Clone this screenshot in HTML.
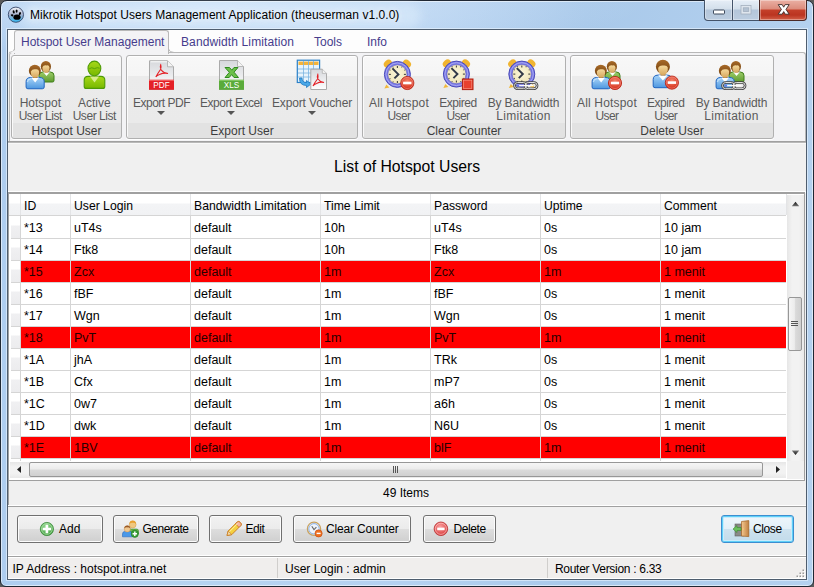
<!DOCTYPE html>
<html><head><meta charset="utf-8">
<style>
*{margin:0;padding:0;box-sizing:border-box}
html,body{width:814px;height:587px;overflow:hidden;background:#5a5a5a;font-family:"Liberation Sans",sans-serif;font-size:12px;color:#000}
body{position:relative}
.a{position:absolute}
.t{position:absolute;white-space:nowrap;line-height:14px}
#win{position:absolute;left:0;top:0;width:814px;height:587px;border:1px solid #1f2733;border-radius:7px 7px 6px 6px;background:radial-gradient(ellipse 430px 50px at 210px 6px,rgba(222,236,252,0.7),rgba(222,236,252,0) 100%),linear-gradient(90deg,#aecdef 0%,#b6d3f1 25%,#b4d1f0 50%,#a9c9ea 72%,#b4d1ef 100%);box-shadow:inset 0 0 0 1px rgba(255,255,255,0.55)}
#client{position:absolute;left:7px;top:29px;width:800px;height:551px;border:1px solid #4e5d6e;background:#f0f0f0;box-shadow:0 0 0 1px rgba(235,245,255,0.6)}
/* caption buttons */
.cap{position:absolute;top:0;height:21px;box-shadow:inset 0 0 0 1px rgba(255,255,255,0.35);border:1px solid #44546a;border-top:none}
/* ribbon */
#tabs{position:absolute;left:8px;top:30px;width:798px;height:112px;background:#f4f5f7}
.grp{position:absolute;top:55px;height:84px;border:1px solid #b0b0b0;border-radius:3px;background:linear-gradient(180deg,#f8f8f8 0,#f5f5f5 20px,#ebebeb 20px,#eaeaea 67px,#e2e2e2 67px);box-shadow:inset 1px 1px 0 rgba(255,255,255,0.8),0 1px 0 #fff}
.bl{position:absolute;color:#5a5a5a;text-align:center;line-height:13px;white-space:nowrap}
.gl{position:absolute;color:#3c3c3c;text-align:center;white-space:nowrap;line-height:14px}
/* grid */
.row{position:absolute;left:20px;width:767px;height:22px;border-bottom:1px solid #d8d8d8}
.row.red{background:#ff0000}
.row span{position:absolute;top:4px;white-space:nowrap;line-height:14px;font-size:12.5px}
.row.red span{color:#800000}
.vl{position:absolute;width:1px;background:#d8d8d8}
.btn{position:absolute;top:515px;height:28px;border:1px solid #707070;border-radius:3px;background:linear-gradient(180deg,#f2f2f2 0,#ebebeb 50%,#dddddd 51%,#cfcfcf 100%);box-shadow:inset 0 0 0 1px #fcfcfc}
.btn span{position:absolute;top:6px;white-space:nowrap;line-height:14px;color:#000}

#grid{position:absolute;left:9px;top:194px;width:778px;height:267px;overflow:hidden;background:#fff}
.hdr{position:absolute;left:0;top:0;width:777px;height:22px;border-bottom:1px solid #d5d5d5;background:linear-gradient(180deg,#ffffff 0,#ffffff 9px,#f3f4f6 10px,#f1f2f4 100%)}
.ht{position:absolute;top:5px;white-space:nowrap;line-height:14px;font-size:12.2px}
.hs{position:absolute;top:0;width:1px;height:21px;background:#e3e4e6}
.rh{position:absolute;left:2px;width:9px;height:22px;border-bottom:1px solid #d5d5d5;background:linear-gradient(180deg,#fff 0,#fff 8px,#f0f0f2 9px,#ececee 100%)}
.row{position:absolute;left:12px;width:765px;height:22px;border-bottom:1px solid #d5d5d5}
.row.red{background:#ff0000}
.row span{position:absolute;top:4px;white-space:nowrap;line-height:14px;font-size:12.5px}
.row.red span{color:#260000}
.vl{position:absolute;top:22px;width:1px;height:260px;background:#d5d5d5}
.tab{color:#463c8c}
.dd{position:absolute;top:111px;width:0;height:0;border-left:4px solid transparent;border-right:4px solid transparent;border-top:4px solid #555}
</style></head><body>
<div id="win">
  <div class="a" style="left:20px;top:3px;width:400px;height:24px;border-radius:12px;background:rgba(220,236,252,0.55);filter:blur(5px)"></div>
  <div class="t" style="left:29px;top:7px;font-size:12px;color:#000;letter-spacing:0.05px;text-shadow:0 0 6px rgba(255,255,255,0.9),0 0 10px rgba(235,245,255,0.8)">Mikrotik Hotspot Users Management Application (theuserman v1.0.0)</div>
</div>
<!-- caption buttons -->
<div class="cap" style="left:704px;width:29px;border-radius:0 0 0 4px;background:linear-gradient(180deg,#e6eef7 0,#d3dfeb 45%,#b4c6da 50%,#bccde0 100%)"></div>
<div class="cap" style="left:732px;width:28px;border-left:1px solid #44546a;background:linear-gradient(180deg,#e6eef7 0,#d3dfeb 45%,#b4c6da 50%,#bccde0 100%)"></div>
<div class="cap" style="left:759px;width:48px;border-radius:0 0 4px 0;background:linear-gradient(180deg,#eab0a4 0,#dc8c7c 45%,#c4402a 50%,#bb3420 75%,#d26048 100%);border-color:#4a2a28"></div>
<svg class="a" style="left:704px;top:0" width="104" height="22" viewBox="0 0 104 22">
  <rect x="9.5" y="10" width="11" height="4" rx="0.8" fill="#fff" stroke="#3e4a5c" stroke-width="1"/>
  <rect x="37" y="5.5" width="10" height="8.5" fill="#dfe6ee" stroke="#a4b0be" stroke-width="0.8"/>
  <rect x="39.2" y="7.8" width="5.6" height="3.8" fill="#b4c2d2" stroke="#98a6b6" stroke-width="0.6"/>
  <path d="M74.2 4.6 L78.2 4.6 L79.7 7.2 L81.2 4.6 L85.2 4.6 L82 9.4 L85.2 14.2 L81.2 14.2 L79.7 11.6 L78.2 14.2 L74.2 14.2 L77.4 9.4 Z" fill="#fff" stroke="#3a2a28" stroke-width="0.9" stroke-linejoin="round"/>
</svg>
<svg class="a" style="left:4px;top:3px" width="24" height="24" viewBox="0 0 24 24">
  <defs><linearGradient id="gIco" x1="0" y1="0" x2="0" y2="1"><stop offset="0" stop-color="#f4f4f8"/><stop offset="0.5" stop-color="#a8b4d0"/><stop offset="1" stop-color="#30b8f4"/></linearGradient></defs>
  <circle cx="11.9" cy="11.7" r="7.6" fill="url(#gIco)" stroke="#34466a" stroke-width="0.9"/>
  <ellipse cx="13" cy="14.2" rx="3.6" ry="2.6" fill="#000"/>
  <ellipse cx="9.7" cy="8.9" rx="1" ry="1.6" fill="#000" transform="rotate(-15 9.7 8.9)"/>
  <ellipse cx="12.6" cy="8.1" rx="1" ry="1.6" fill="#000"/>
  <ellipse cx="15.9" cy="10.6" rx="1" ry="1.6" fill="#000" transform="rotate(25 15.9 10.6)"/>
  <ellipse cx="8.1" cy="12.3" rx="1.3" ry="1" fill="#000" transform="rotate(20 8.1 12.3)"/>
</svg>
<div id="client"></div>
<div class="a" style="left:8px;top:30px;width:798px;height:23px;background:#fdfdfd"></div>
<div class="a" style="left:9px;top:52px;width:797px;height:90px;border:1px solid #b8b8b8;border-bottom:none;border-radius:3px 3px 0 0;background:#f3f3f5"></div>
<div class="a" style="left:14px;top:30px;width:155px;height:24px;border:1px solid #b8b8b8;border-bottom:none;border-radius:3px 3px 0 0;background:#f3f3f5"></div>
<svg class="a" style="left:8px;top:46px" width="170" height="10" viewBox="0 0 170 10"><path d="M1 6.5 Q5.5 6.5 6.5 3" fill="none" stroke="#b8b8b8" stroke-width="1"/><path d="M2 7 L7 7 L7 4 Z" fill="#f3f3f5"/><path d="M160.5 3 Q161.5 6.5 166 6.5" fill="none" stroke="#b8b8b8" stroke-width="1"/></svg>
<div class="t tab" style="left:21px;top:35px">Hotspot User Management</div>
<div class="t tab" style="left:181px;top:35px;letter-spacing:0.12px">Bandwidth Limitation</div>
<div class="t tab" style="left:314px;top:35px">Tools</div>
<div class="t tab" style="left:367px;top:35px">Info</div>

<!-- ribbon groups -->
<div class="grp" style="left:11px;width:111px"></div>
<div class="grp" style="left:126px;width:232px"></div>
<div class="grp" style="left:362px;width:204px"></div>
<div class="grp" style="left:570px;width:204px"></div>

<svg width="0" height="0" style="position:absolute">
<defs>
  <linearGradient id="gBlue" x1="0" y1="0" x2="0" y2="1"><stop offset="0" stop-color="#a8d4f8"/><stop offset="1" stop-color="#4d97e0"/></linearGradient>
  <linearGradient id="gGreenShirt" x1="0" y1="0" x2="0" y2="1"><stop offset="0" stop-color="#9ccc6a"/><stop offset="1" stop-color="#5f9c2e"/></linearGradient>
  <linearGradient id="gHair" x1="0" y1="0" x2="0" y2="1"><stop offset="0" stop-color="#a86a28"/><stop offset="1" stop-color="#6e3e0c"/></linearGradient>
  <linearGradient id="gSkin" x1="0" y1="0" x2="0" y2="1"><stop offset="0" stop-color="#f4d89a"/><stop offset="1" stop-color="#d8a860"/></linearGradient>
  <linearGradient id="gLime" x1="0" y1="0" x2="0" y2="1"><stop offset="0" stop-color="#a6d818"/><stop offset="1" stop-color="#78b800"/></linearGradient>
  <linearGradient id="gPage" x1="0" y1="0" x2="0" y2="1"><stop offset="0" stop-color="#d6d8dc"/><stop offset="1" stop-color="#ffffff"/></linearGradient>
  <radialGradient id="gRed" cx="0.5" cy="0.35" r="0.6"><stop offset="0" stop-color="#f4846c"/><stop offset="1" stop-color="#d6301a"/></radialGradient>
  <radialGradient id="gFace" cx="0.5" cy="0.45" r="0.6"><stop offset="0" stop-color="#fbf6dc"/><stop offset="1" stop-color="#efe4b4"/></radialGradient>
  <linearGradient id="gChain" x1="0" y1="0" x2="0" y2="1"><stop offset="0" stop-color="#f0f0f0"/><stop offset="1" stop-color="#8a8a8a"/></linearGradient>

  <symbol id="pBlue" viewBox="0 0 40 40" overflow="visible">
    <path d="M6.1 27.5 Q6.1 23.7 10.5 23.5 L19.8 23.5 Q24.2 23.7 24.2 27.5 L24.2 33 Q24.2 34.75 22.4 34.75 L7.9 34.75 Q6.1 34.75 6.1 33 Z" fill="url(#gBlue)" stroke="#1f64c0" stroke-width="1"/>
    <path d="M7.5 28 Q7.5 25 10.8 24.8" fill="none" stroke="#d8ecfc" stroke-width="0.8"/>
    <path d="M11.2 23.6 L15.15 28.5 L19.1 23.6 Z" fill="#fff"/>
    <rect x="12.9" y="20.5" width="4.5" height="3.5" fill="#b88442"/>
    <ellipse cx="14.85" cy="16.8" rx="6" ry="6.1" fill="url(#gHair)"/>
    <path d="M10.8 17.4 Q12.3 14.6 15.8 15.3 Q18.5 14.9 19.1 17.2 L19 20 Q18.2 23.4 15 23.4 Q11.8 23.4 11 20 Z" fill="url(#gSkin)"/>
  </symbol>
  <symbol id="pGreen" viewBox="0 0 40 40" overflow="visible">
    <path d="M19 21.5 Q19 18.2 22.5 18 L30.5 18 Q34 18.2 34 21.5 L34 26.5 Q34 28 32.5 28 L20.5 28 Q19 28 19 26.5 Z" fill="url(#gGreenShirt)" stroke="#3f7e1a" stroke-width="1"/>
    <path d="M23.2 18.1 L26.5 22 L29.8 18.1 Z" fill="#fff"/>
    <rect x="24.4" y="15.6" width="4.2" height="3" fill="#b88442"/>
    <ellipse cx="25.9" cy="12.5" rx="5.1" ry="5.6" fill="url(#gHair)"/>
    <path d="M22.4 13.2 Q23.5 10.8 26.6 11.4 Q29 11 29.5 13.2 L29.4 15.5 Q28.7 18.6 26 18.6 Q23.3 18.6 22.6 15.5 Z" fill="url(#gSkin)"/>
  </symbol>
  <symbol id="pSingle" viewBox="0 0 40 40" overflow="visible">
    <path d="M7.2 25.5 Q7.2 21.3 12 21.1 L21 21.1 Q25.8 21.3 25.8 25.5 L25.8 32 Q25.8 33.7 24 33.7 L9 33.7 Q7.2 33.7 7.2 32 Z" fill="url(#gBlue)" stroke="#1f64c0" stroke-width="1"/>
    <path d="M12.2 21.2 L16.9 26.6 L21.6 21.2 Z" fill="#fff"/>
    <rect x="14.6" y="18" width="4.8" height="3.6" fill="#b88442"/>
    <ellipse cx="16.9" cy="12.8" rx="7" ry="7" fill="url(#gHair)"/>
    <path d="M12.2 13.8 Q14 10.8 17.6 11.6 Q21 11.2 21.8 13.6 L21.7 16.5 Q20.8 21 16.9 21 Q13 21 12.3 16.5 Z" fill="url(#gSkin)"/>
  </symbol>
  <symbol id="minus" viewBox="0 0 40 40" overflow="visible">
    <circle cx="0" cy="0" r="6.6" fill="url(#gRed)" stroke="#b8200e" stroke-width="0.8"/>
    <circle cx="0" cy="0" r="5.6" fill="none" stroke="#fbb" stroke-opacity="0.6" stroke-width="0.6"/>
    <rect x="-4.2" y="-1.3" width="8.4" height="2.6" fill="#fff"/>
  </symbol>
  <symbol id="chain" viewBox="0 0 40 40" overflow="visible">
    <rect x="1" y="1" width="12" height="6.2" rx="3.1" fill="none" stroke="#404040" stroke-width="2.6"/>
    <rect x="11.6" y="1" width="12" height="6.2" rx="3.1" fill="none" stroke="#404040" stroke-width="2.6"/>
    <rect x="1" y="1" width="12" height="6.2" rx="3.1" fill="none" stroke="#e0e0e0" stroke-width="1"/>
    <rect x="11.6" y="1" width="12" height="6.2" rx="3.1" fill="none" stroke="#e0e0e0" stroke-width="1"/>
    <rect x="5" y="3.4" width="15" height="1.4" fill="#fafafa"/>
    <circle cx="4.4" cy="4.1" r="1.2" fill="#6a7ae0"/>
  </symbol>
  <symbol id="clock" viewBox="0 0 40 40" overflow="visible">
    <ellipse cx="-9.6" cy="-10.8" rx="4.4" ry="3.4" fill="#f0b430" transform="rotate(-40 -9.6 -10.8)"/>
    <ellipse cx="9.6" cy="-10.8" rx="4.4" ry="3.4" fill="#f0b430" transform="rotate(40 9.6 -10.8)"/>
    <path d="M-11 10 L-13 14 L-8 13 Z" fill="#f2b838"/>
    <path d="M11 10 L13 14 L8 13 Z" fill="#f2b838"/>
    <circle cx="0" cy="0" r="13" fill="#7878e4" stroke="#4a4ab8" stroke-width="1"/>
    <circle cx="0" cy="0" r="11.5" fill="none" stroke="#a8a8f4" stroke-width="1"/>
    <circle cx="0" cy="0" r="9.6" fill="url(#gFace)" stroke="#5c5cc8" stroke-width="0.6"/>
    <g stroke="#444" stroke-width="1.1">
      <line x1="0" y1="-8.5" x2="0" y2="-6.5"/><line x1="0" y1="8.5" x2="0" y2="6.5"/>
      <line x1="-8.5" y1="0" x2="-6.5" y2="0"/><line x1="8.5" y1="0" x2="6.5" y2="0"/>
    </g>
    <g fill="#555"><circle cx="4.3" cy="-7.4" r="0.6"/><circle cx="7.4" cy="-4.3" r="0.6"/><circle cx="7.4" cy="4.3" r="0.6"/><circle cx="4.3" cy="7.4" r="0.6"/><circle cx="-4.3" cy="7.4" r="0.6"/><circle cx="-7.4" cy="4.3" r="0.6"/><circle cx="-7.4" cy="-4.3" r="0.6"/><circle cx="-4.3" cy="-7.4" r="0.6"/></g>
    <path d="M-5 -6 L1 0 L-3 4" fill="none" stroke="#333a48" stroke-width="2" stroke-linejoin="miter"/>
  </symbol>
</defs>
</svg>

<!-- Hotspot user list -->
<svg class="a" style="left:20px;top:54px" width="40" height="40" viewBox="0 0 40 40">
  <use href="#pGreen" x="0" y="0" width="40" height="40"/>
  <use href="#pBlue" x="0" y="0" width="40" height="40"/>
</svg>
<!-- Active user list -->
<svg class="a" style="left:74px;top:56px" width="40" height="40" viewBox="0 0 40 40">
  <path d="M10.2 24 Q10.2 20.6 14 20.4 L27 20.4 Q30.8 20.6 30.8 24 L30.8 30.4 Q30.8 32.4 28.8 32.4 L12.2 32.4 Q10.2 32.4 10.2 30.4 Z" fill="url(#gLime)" stroke="#4e9a06" stroke-width="1.1"/>
  <path d="M16 20.6 L20.5 26.5 L25 20.6 Z" fill="#d8ec8c"/>
  <ellipse cx="20.4" cy="12.4" rx="6.4" ry="7.3" fill="url(#gLime)" stroke="#4e9a06" stroke-width="1.1"/>
  <path d="M15.2 12.8 Q17.5 10.8 20.5 12.6 Q23.5 11 25.6 12.2" fill="none" stroke="#4e9a06" stroke-width="0.8"/>
</svg>
<!-- PDF -->
<svg class="a" style="left:143px;top:56px" width="40" height="40" viewBox="0 0 40 40">
  <path d="M6.5 4.8 L24.5 4.8 L30.5 10.8 L30.5 33.5 L6.5 33.5 Z" fill="url(#gPage)" stroke="#aaa" stroke-width="1"/>
  <path d="M7.5 5.8 L24 5.8" stroke="#fff" stroke-width="1"/>
  <path d="M24.5 4.8 L24.5 10.8 L30.5 10.8" fill="#f4f4f4" stroke="#aaa" stroke-width="0.8"/>
  <rect x="6" y="23.8" width="25" height="10" fill="#e42026"/>
  <rect x="6" y="23.8" width="25" height="1" fill="#f46a6a"/>
  <text x="18.5" y="32" font-family="Liberation Sans" font-size="8.2" fill="#fff" text-anchor="middle">PDF</text>
  <path d="M12.8 21 Q15 17 17.5 13.5 Q18.5 11 17.7 8.8 Q16.6 11 18.2 14 Q20.5 17 25 17.5 Q21 16.5 16.5 18.5 Q14 19.5 12.8 21 Z" fill="none" stroke="#e42026" stroke-width="1.1"/>
</svg>
<!-- XLS -->
<svg class="a" style="left:210px;top:56px" width="40" height="40" viewBox="0 0 40 40">
  <path d="M9.5 4.5 L27.5 4.5 L33.5 10.5 L33.5 33.5 L9.5 33.5 Z" fill="url(#gPage)" stroke="#aaa" stroke-width="1"/>
  <path d="M27.5 4.5 L27.5 10.5 L33.5 10.5" fill="#f4f4f4" stroke="#aaa" stroke-width="0.8"/>
  <rect x="9" y="23.8" width="25" height="10" fill="#5aab3a"/>
  <rect x="9" y="23.8" width="25" height="1" fill="#8ccc6a"/>
  <text x="21.5" y="32" font-family="Liberation Sans" font-size="8.2" fill="#fff" text-anchor="middle">XLS</text>
  <path d="M15 11.5 L19.5 11.5 L21.8 14.2 L24 11.5 L28 11.5 L24 16.2 L28.5 21.5 L24 21.5 L21.6 18.6 L19.2 21.5 L15 21.5 L19.4 16.3 Z" fill="#6cc04a" stroke="#2e8a1e" stroke-width="1"/>
</svg>
<!-- Voucher -->
<svg class="a" style="left:290px;top:54px" width="45" height="45" viewBox="0 0 45 45">
  <rect x="7.3" y="6.2" width="22.3" height="22.3" fill="#e8f4fc" stroke="#2a80c8" stroke-width="1.2"/>
  <rect x="8.5" y="7.6" width="20" height="3.4" fill="#f4b43a"/>
  <g stroke="#7ab4e0" stroke-width="0.8"><line x1="13.5" y1="7" x2="13.5" y2="28"/><line x1="18.5" y1="7" x2="18.5" y2="28"/><line x1="23.5" y1="7" x2="23.5" y2="28"/><line x1="8" y1="15" x2="29" y2="15"/><line x1="8" y1="19" x2="29" y2="19"/><line x1="8" y1="23" x2="29" y2="23"/></g>
  <path d="M9.5 24 L12 24 Q12 28.5 16.5 28.5 L16.5 26.5 L21 30 L16.5 33.5 L16.5 31.5 Q9.5 31.5 9.5 24 Z" fill="#4aa8e8" stroke="#1e78c0" stroke-width="0.8"/>
  <path d="M20.8 15.2 L32.3 15.2 L36.5 19.4 L36.5 35.5 L20.8 35.5 Z" fill="url(#gPage)" stroke="#aaa" stroke-width="1"/>
  <path d="M32.3 15.2 L32.3 19.4 L36.5 19.4" fill="#f4f4f4" stroke="#aaa" stroke-width="0.7"/>
  <path d="M23 32 Q25 28 27.5 25 Q28.3 22.5 27.8 20.5 Q26.8 22.5 28 25 Q30 28 34 28.5 Q30.5 27.5 26.5 29.5 Q24 30.6 23 32 Z" fill="none" stroke="#e42026" stroke-width="1.1"/>
</svg>
<!-- clocks -->
<svg class="a" style="left:380px;top:54px" width="40" height="40" viewBox="0 0 40 40">
  <use href="#clock" x="17.4" y="20.4" width="40" height="40"/>
  <use href="#minus" x="27.3" y="29" width="40" height="40"/>
</svg>
<svg class="a" style="left:438px;top:54px" width="40" height="40" viewBox="0 0 40 40">
  <use href="#clock" x="18.4" y="20.1" width="40" height="40"/>
  <rect x="24.4" y="25" width="10.6" height="10.6" fill="#e8402e" stroke="#b01e10" stroke-width="1"/>
  <rect x="25.6" y="26.2" width="8.2" height="8.2" fill="none" stroke="#f89a88" stroke-width="0.6"/>
</svg>
<svg class="a" style="left:502px;top:54px" width="40" height="40" viewBox="0 0 40 40">
  <use href="#clock" x="19.8" y="20.1" width="40" height="40"/>
  <use href="#chain" x="11.5" y="27.5" width="40" height="40"/>
</svg>
<!-- delete users -->
<svg class="a" style="left:586px;top:54px" width="40" height="40" viewBox="0 0 40 40">
  <use href="#pGreen" x="0" y="0" width="40" height="40"/>
  <use href="#pBlue" x="0" y="0" width="40" height="40"/>
  <use href="#minus" x="29" y="29" width="40" height="40"/>
</svg>
<svg class="a" style="left:646px;top:54px" width="40" height="40" viewBox="0 0 40 40">
  <use href="#pSingle" x="0" y="0" width="40" height="40"/>
  <use href="#minus" x="25.9" y="28.6" width="40" height="40"/>
</svg>
<svg class="a" style="left:710px;top:54px" width="40" height="40" viewBox="0 0 40 40">
  <use href="#pGreen" x="0" y="0" width="40" height="40"/>
  <use href="#pBlue" x="0" y="0" width="40" height="40"/>
  <use href="#chain" x="11.5" y="27.5" width="40" height="40"/>
</svg>

<div class="bl" style="left:-9.7px;width:100px;top:97px">Hotspot<br><span style="letter-spacing:-0.45px">User List</span></div>
<div class="bl" style="left:44.3px;width:100px;top:97px">Active<br><span style="letter-spacing:-0.45px">User List</span></div>
<div class="bl" style="left:111.5px;width:100px;top:97px"><span style="letter-spacing:-0.5px">Export PDF</span></div>
<div class="bl" style="left:181.0px;width:100px;top:97px"><span style="letter-spacing:-0.45px">Export Excel</span></div>
<div class="bl" style="left:262.0px;width:100px;top:97px"><span style="letter-spacing:-0.14px">Export Voucher</span></div>
<div class="bl" style="left:349.0px;width:100px;top:97px"><span style="letter-spacing:0.18px">All Hotspot</span><br><span style="letter-spacing:-0.6px">User</span></div>
<div class="bl" style="left:408.0px;width:100px;top:97px"><span style="letter-spacing:-0.45px">Expired</span><br><span style="letter-spacing:-0.6px">User</span></div>
<div class="bl" style="left:473.5px;width:100px;top:97px"><span style="letter-spacing:-0.14px">By Bandwidth</span><br><span style="letter-spacing:0.3px">Limitation</span></div>
<div class="bl" style="left:557.0px;width:100px;top:97px"><span style="letter-spacing:0.18px">All Hotspot</span><br><span style="letter-spacing:-0.6px">User</span></div>
<div class="bl" style="left:615.8px;width:100px;top:97px"><span style="letter-spacing:-0.45px">Expired</span><br><span style="letter-spacing:-0.6px">User</span></div>
<div class="bl" style="left:681.5px;width:100px;top:97px"><span style="letter-spacing:-0.14px">By Bandwidth</span><br><span style="letter-spacing:0.3px">Limitation</span></div>
<div class="dd" style="left:157.2px"></div>
<div class="dd" style="left:226.7px"></div>
<div class="dd" style="left:307.7px"></div>
<div class="gl" style="left:11px;width:111px;top:124px">Hotspot User</div>
<div class="gl" style="left:126px;width:232px;top:124px">Export User</div>
<div class="gl" style="left:362px;width:204px;top:124px">Clear Counter</div>
<div class="gl" style="left:570px;width:204px;top:124px">Delete User</div>

<!-- title panel -->
<div class="a" style="left:8px;top:141px;width:798px;height:52px;border-top:1px solid #a0a0a0;background:#f0f0f0;box-shadow:inset 0 1px 0 #b8b8b8,inset 0 2px 0 #f8f8f8,inset 0 -2px 0 #fff"></div>
<div class="t" style="left:334px;top:158px;font-size:15.75px;line-height:18px">List of Hotspot Users</div>

<!-- grid -->
<div class="a" style="left:8px;top:192px;width:797px;height:289px;border:1px solid #a0a0a0;border-top:2px solid #a0a0a0;background:#fff"></div>
<div id="grid">
<div class="hdr"></div>
<span class="ht" style="left:15px">ID</span>
<span class="ht" style="left:65px">User Login</span>
<span class="ht" style="left:185px">Bandwidth Limitation</span>
<span class="ht" style="left:315px">Time Limit</span>
<span class="ht" style="left:425px">Password</span>
<span class="ht" style="left:535px">Uptime</span>
<span class="ht" style="left:655px">Comment</span>
<div class="hs" style="left:11px"></div>
<div class="hs" style="left:61px"></div>
<div class="hs" style="left:181px"></div>
<div class="hs" style="left:311px"></div>
<div class="hs" style="left:421px"></div>
<div class="hs" style="left:531px"></div>
<div class="hs" style="left:651px"></div>
<div class="hs" style="left:777px"></div>
<div class="rh" style="top:23px"></div>
<div class="row" style="top:23px"><span style="left:3px">*13</span><span style="left:53px">uT4s</span><span style="left:173px">default</span><span style="left:303px">10h</span><span style="left:413px">uT4s</span><span style="left:523px">0s</span><span style="left:643px">10 jam</span></div>
<div class="rh" style="top:45px"></div>
<div class="row" style="top:45px"><span style="left:3px">*14</span><span style="left:53px">Ftk8</span><span style="left:173px">default</span><span style="left:303px">10h</span><span style="left:413px">Ftk8</span><span style="left:523px">0s</span><span style="left:643px">10 jam</span></div>
<div class="rh" style="top:67px"></div>
<div class="row red" style="top:67px"><span style="left:3px">*15</span><span style="left:53px">Zcx</span><span style="left:173px">default</span><span style="left:303px">1m</span><span style="left:413px">Zcx</span><span style="left:523px">1m</span><span style="left:643px">1 menit</span></div>
<div class="rh" style="top:89px"></div>
<div class="row" style="top:89px"><span style="left:3px">*16</span><span style="left:53px">fBF</span><span style="left:173px">default</span><span style="left:303px">1m</span><span style="left:413px">fBF</span><span style="left:523px">0s</span><span style="left:643px">1 menit</span></div>
<div class="rh" style="top:111px"></div>
<div class="row" style="top:111px"><span style="left:3px">*17</span><span style="left:53px">Wgn</span><span style="left:173px">default</span><span style="left:303px">1m</span><span style="left:413px">Wgn</span><span style="left:523px">0s</span><span style="left:643px">1 menit</span></div>
<div class="rh" style="top:133px"></div>
<div class="row red" style="top:133px"><span style="left:3px">*18</span><span style="left:53px">PvT</span><span style="left:173px">default</span><span style="left:303px">1m</span><span style="left:413px">PvT</span><span style="left:523px">1m</span><span style="left:643px">1 menit</span></div>
<div class="rh" style="top:155px"></div>
<div class="row" style="top:155px"><span style="left:3px">*1A</span><span style="left:53px">jhA</span><span style="left:173px">default</span><span style="left:303px">1m</span><span style="left:413px">TRk</span><span style="left:523px">0s</span><span style="left:643px">1 menit</span></div>
<div class="rh" style="top:177px"></div>
<div class="row" style="top:177px"><span style="left:3px">*1B</span><span style="left:53px">Cfx</span><span style="left:173px">default</span><span style="left:303px">1m</span><span style="left:413px">mP7</span><span style="left:523px">0s</span><span style="left:643px">1 menit</span></div>
<div class="rh" style="top:199px"></div>
<div class="row" style="top:199px"><span style="left:3px">*1C</span><span style="left:53px">0w7</span><span style="left:173px">default</span><span style="left:303px">1m</span><span style="left:413px">a6h</span><span style="left:523px">0s</span><span style="left:643px">1 menit</span></div>
<div class="rh" style="top:221px"></div>
<div class="row" style="top:221px"><span style="left:3px">*1D</span><span style="left:53px">dwk</span><span style="left:173px">default</span><span style="left:303px">1m</span><span style="left:413px">N6U</span><span style="left:523px">0s</span><span style="left:643px">1 menit</span></div>
<div class="rh" style="top:243px"></div>
<div class="row red" style="top:243px"><span style="left:3px">*1E</span><span style="left:53px">1BV</span><span style="left:173px">default</span><span style="left:303px">1m</span><span style="left:413px">blF</span><span style="left:523px">1m</span><span style="left:643px">1 menit</span></div>
<div class="vl" style="left:11px"></div>
<div class="vl" style="left:61px"></div>
<div class="vl" style="left:181px"></div>
<div class="vl" style="left:311px"></div>
<div class="vl" style="left:421px"></div>
<div class="vl" style="left:531px"></div>
<div class="vl" style="left:651px"></div>
</div>


<!-- scrollbars -->
<div class="a" style="left:787px;top:195px;width:17px;height:266px;background:linear-gradient(90deg,#e6e6e6 0,#f2f2f2 30%,#f2f2f2 70%,#e9e9e9 100%)"></div>
<div class="a" style="left:788px;top:297px;width:14px;height:54px;border:1px solid #979797;border-radius:2px;background:linear-gradient(90deg,#f6f6f6 0,#ececec 45%,#dadada 55%,#d0d0d0 100%)"></div>
<div class="a" style="left:791px;top:321px;width:7px;height:1px;background:#555;box-shadow:0 2px 0 #555,0 4px 0 #555"></div>
<svg class="a" style="left:787px;top:194px" width="17" height="267" viewBox="0 0 17 267">
  <defs><linearGradient id="gArr" x1="0" y1="0" x2="0" y2="1"><stop offset="0" stop-color="#111"/><stop offset="1" stop-color="#777"/></linearGradient><linearGradient id="gArrD" x1="0" y1="0" x2="0" y2="1"><stop offset="0" stop-color="#777"/><stop offset="1" stop-color="#111"/></linearGradient></defs>
  <path d="M4.8 12.2 L8.5 7.8 L12.2 12.2 Z" fill="url(#gArr)"/>
  <path d="M4.8 256.6 L8.5 261 L12.2 256.6 Z" fill="url(#gArrD)"/>
</svg>
<div class="a" style="left:10px;top:462px;width:776px;height:16px;background:linear-gradient(180deg,#e6e6e6 0,#f2f2f2 30%,#f2f2f2 70%,#e9e9e9 100%)"></div>
<div class="a" style="left:787px;top:461px;width:17px;height:18px;background:#f0f0f0"></div><div class="a" style="left:10px;top:478px;width:777px;height:1px;background:#fff"></div>
<div class="a" style="left:29px;top:462px;width:734px;height:15px;border:1px solid #979797;border-radius:2px;background:linear-gradient(180deg,#f6f6f6 0,#ececec 45%,#dadada 55%,#d0d0d0 100%)"></div>
<div class="a" style="left:393px;top:466px;width:1px;height:7px;background:#555;box-shadow:2px 0 0 #555,4px 0 0 #555"></div>
<svg class="a" style="left:10px;top:462px" width="777" height="16" viewBox="0 0 777 16">
  <path d="M11 4 L7 7.5 L11 11 Z" fill="#222"/>
  <path d="M766 4 L770 7.5 L766 11 Z" fill="#222"/>
</svg>

<!-- items -->
<div class="t" style="left:383px;top:486px">49 Items</div>
<div class="a" style="left:8px;top:505px;width:798px;height:1px;background:#fff"></div><div class="a" style="left:8px;top:506px;width:798px;height:1px;background:#a0a0a0"></div><div class="a" style="left:8px;top:480px;width:1px;height:25px;background:#a0a0a0"></div>

<!-- buttons -->
<div class="btn" style="left:17px;width:86px"><span style="left:41px">Add</span></div>
<div class="btn" style="left:113px;width:86px"><span style="left:28.5px;letter-spacing:-0.5px">Generate</span></div>
<div class="btn" style="left:209px;width:73px"><span style="left:35.5px;letter-spacing:-0.45px">Edit</span></div>
<div class="btn" style="left:293px;width:118px"><span style="left:32px;letter-spacing:-0.16px">Clear Counter</span></div>
<div class="btn" style="left:423px;width:73px"><span style="left:29.5px;letter-spacing:-0.42px">Delete</span></div>
<div class="btn" style="left:721px;width:73px;border-color:#3d8ed0;border-radius:3px;box-shadow:inset 0 0 0 1px #5fd0f8,inset 0 0 0 2px #c8ecfc;background:linear-gradient(180deg,#eef6fb 0,#e2eff8 50%,#cde2ef 51%,#c2dbea 100%)"><span style="left:31px;letter-spacing:-0.4px">Close</span></div>
<svg class="a" style="left:0;top:505px" width="814" height="45" viewBox="0 505 814 45">
  <defs>
    <radialGradient id="gAdd" cx="0.45" cy="0.35" r="0.65"><stop offset="0" stop-color="#9ee09a"/><stop offset="1" stop-color="#3c9a3c"/></radialGradient>
    <radialGradient id="gDel" cx="0.45" cy="0.35" r="0.65"><stop offset="0" stop-color="#fca0a0"/><stop offset="1" stop-color="#d83a3a"/></radialGradient>
    <linearGradient id="gDoor" x1="0" y1="0" x2="1" y2="0"><stop offset="0" stop-color="#f4c890"/><stop offset="1" stop-color="#c08040"/></linearGradient>
  </defs>
  <!-- add -->
  <circle cx="46.9" cy="529" r="6.6" fill="url(#gAdd)" stroke="#3a8a3a" stroke-width="0.8"/>
  <circle cx="46.9" cy="529" r="5.4" fill="none" stroke="#c8f0c0" stroke-width="0.6"/>
  <path d="M45.6 524.8 h2.6 v2.9 h2.9 v2.6 h-2.9 v2.9 h-2.6 v-2.9 h-2.9 v-2.6 h2.9 Z" fill="#fff"/>
  <!-- generate -->
  <path d="M128.5 529 h8 q2 0 2 2 v3 h-12 v-3 q0 -2 2 -2 Z" fill="#6cb84c" stroke="#3c8a2c" stroke-width="0.6"/>
  <circle cx="132.7" cy="524.6" r="3.4" fill="#f0c880" stroke="#d09a40" stroke-width="0.5"/>
  <path d="M129.3 524 q0.5 -3.4 3.4 -3.4 q3 0 3.4 3.4 q-1.5 -1.4 -3.4 -1.2 q-2 -0.2 -3.4 1.2 Z" fill="#e8a030"/>
  <path d="M122.5 534 q0 -2.6 2.6 -2.6 h4.6 q2.6 0 2.6 2.6 v2.8 h-9.8 Z" fill="#4a98e8" stroke="#2a6ac0" stroke-width="0.6"/>
  <circle cx="127.3" cy="528.9" r="3.1" fill="#f0c890" stroke="#c89050" stroke-width="0.5"/>
  <path d="M124.2 528.6 q0.3 -3.2 3.1 -3.2 q2.8 0 3.1 3.2 q-1.4 -1.4 -3.1 -1.2 q-1.7 -0.2 -3.1 1.2 Z" fill="#9a5a28"/>
  <circle cx="134.8" cy="533.8" r="3.6" fill="#3aa03a" stroke="#1e7a1e" stroke-width="0.6"/>
  <path d="M134.1 531.6 h1.4 v1.5 h1.5 v1.4 h-1.5 v1.5 h-1.4 v-1.5 h-1.5 v-1.4 h1.5 Z" fill="#fff"/>
  <!-- edit pencil -->
  <path d="M227 535.5 L228.2 531 L237.2 522 Q238.6 520.8 240 522.2 L240.6 522.8 Q242 524.2 240.8 525.6 L231.8 534.6 Z" fill="#f4d040" stroke="#c8781a" stroke-width="0.9" stroke-linejoin="round"/>
  <path d="M237.2 522 Q238.6 520.8 240 522.2 L240.6 522.8 Q242 524.2 240.8 525.6 L239 527.4 L235.4 523.8 Z" fill="#f4b0a0" stroke="#c8781a" stroke-width="0.8"/>
  <path d="M229.2 532 L237.8 523.4" stroke="#fff4a0" stroke-width="1"/>
  <path d="M227 535.5 L228.2 531 L231.8 534.6 Z" fill="#f0d8a8" stroke="#c8781a" stroke-width="0.7"/>
  <!-- clear counter clock -->
  <circle cx="314" cy="528.8" r="6.6" fill="#eef4fc" stroke="#c8a260" stroke-width="1.3"/>
  <circle cx="314" cy="528.8" r="5.2" fill="none" stroke="#80a8e0" stroke-width="0.9"/>
  <path d="M311.8 526.2 L314 529.6 L316.4 527.2" fill="none" stroke="#666" stroke-width="1.1"/>
  <circle cx="318.6" cy="533.4" r="3.6" fill="#f07020" stroke="#c04a10" stroke-width="0.6"/>
  <rect x="316.6" y="532.7" width="4" height="1.4" fill="#fff"/>
  <!-- delete -->
  <circle cx="440.9" cy="528.8" r="6.8" fill="url(#gDel)" stroke="#b83030" stroke-width="0.8"/>
  <circle cx="440.9" cy="528.8" r="5.6" fill="none" stroke="#ffd0d0" stroke-width="0.6"/>
  <rect x="437.2" y="527.6" width="7.4" height="2.6" fill="#fff"/>
  <!-- close door -->
  <rect x="735" y="524" width="9" height="12" fill="#8a8a8a" stroke="#606060" stroke-width="0.6"/>
  <path d="M741.5 521.5 L748.8 520.6 L748.8 536.6 L741.5 536 Z" fill="url(#gDoor)" stroke="#a06020" stroke-width="0.7"/>
  <circle cx="743.2" cy="529" r="0.6" fill="#ffe060"/>
  <path d="M733 529 L737 525.5 L737 527.5 L741 527.5 L741 530.5 L737 530.5 L737 532.5 Z" fill="#6ac060" stroke="#3a8a30" stroke-width="0.6"/>
</svg>
<!-- status -->
<div class="a" style="left:8px;top:555px;width:798px;height:1px;background:#fff"></div>
<div class="a" style="left:8px;top:556px;width:798px;height:23px;border-top:1px solid #a0a0a0;background:#f0eeed;box-shadow:inset 0 1px 0 #fff,inset 0 -1px 0 #fff"></div>
<div class="a" style="left:277px;top:558px;width:1px;height:20px;background:#d0cecc"></div>
<div class="a" style="left:547px;top:558px;width:1px;height:20px;background:#d0cecc"></div>
<div class="t" style="left:12.5px;top:562px">IP Address : hotspot.intra.net</div>
<div class="t" style="left:285px;top:562px">User Login : admin</div>
<div class="t" style="left:555px;top:562px;letter-spacing:-0.3px">Router Version : 6.33</div>
<svg class="a" style="left:790px;top:563px" width="16" height="16" viewBox="0 0 16 16">
  <g fill="#fff"><rect x="13.5" y="7.5" width="1.5" height="1.5"/><rect x="10.5" y="10.5" width="1.5" height="1.5"/><rect x="13.5" y="10.5" width="1.5" height="1.5"/><rect x="7.5" y="13.5" width="1.5" height="1.5"/><rect x="10.5" y="13.5" width="1.5" height="1.5"/><rect x="13.5" y="13.5" width="1.5" height="1.5"/></g>
  <g fill="#9a9a9a"><rect x="12.5" y="6.5" width="1.5" height="1.5"/><rect x="9.5" y="9.5" width="1.5" height="1.5"/><rect x="12.5" y="9.5" width="1.5" height="1.5"/><rect x="6.5" y="12.5" width="1.5" height="1.5"/><rect x="9.5" y="12.5" width="1.5" height="1.5"/><rect x="12.5" y="12.5" width="1.5" height="1.5"/></g>
</svg>
</body></html>
